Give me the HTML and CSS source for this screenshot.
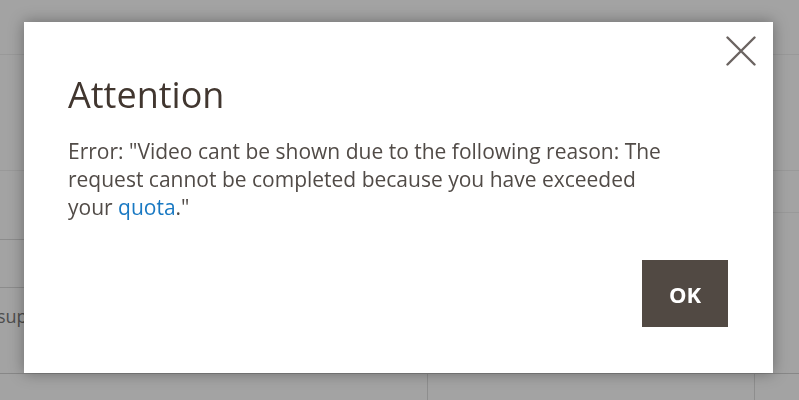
FILE: index.html
```html
<!DOCTYPE html>
<html lang="en">
<head>
    <meta charset="UTF-8">
    <meta name="viewport" content="width=device-width, initial-scale=1.0">
    <title>Attention</title>
    <link rel="stylesheet" href="styles.css">
</head>
<body>
    <div class="page">
        <div class="page-main">
            <div class="page-col">
                <div class="row row-top"></div>
                <div class="row row-mid"></div>
                <div class="row row-a"></div>
                <div class="row row-b"></div>
                <div class="row row-c"><span class="cell-text">sup</span></div>
            </div>
            <div class="page-col">
                <div class="row row-top"></div>
                <div class="row row-mid"></div>
                <div class="row row-d"></div>
                <div class="row row-rest"></div>
            </div>
        </div>
        <div class="page-foot">
            <div class="foot-cell"></div>
            <div class="foot-cell"></div>
            <div class="foot-cell"></div>
        </div>
    </div>

    <div class="overlay">
        <div class="modal">
            <div class="modal-header">
                <h1 class="modal-title">Attention</h1>
                <button class="close-btn" aria-label="Close">
                    <svg width="30" height="30" viewBox="0 0 30 30">
                        <path d="M1.5 1.5 L28.5 28.5 M28.5 1.5 L1.5 28.5" stroke="#6b6461" stroke-width="2.4" stroke-linecap="round" fill="none"/>
                    </svg>
                </button>
            </div>
            <div class="modal-content">
                Error: "Video cant be shown due to the following reason: The request cannot be completed because you have exceeded your <a href="#" class="link">quota</a>."
            </div>
            <div class="modal-footer">
                <button class="ok-btn">OK</button>
            </div>
        </div>
    </div>
</body>
</html>
```

FILE: styles.css
```css
* {
    margin: 0;
    padding: 0;
    box-sizing: border-box;
}

body {
    font-family: 'Open Sans', 'Liberation Sans', sans-serif;
    background: #a3a3a3;
    width: 799px;
    height: 400px;
    overflow: hidden;
}

/* page behind the overlay */
.page {
    display: flex;
    flex-direction: column;
    height: 400px;
}

.page-main {
    display: grid;
    grid-template-columns: 427px 1fr;
    height: 374px;
    border-bottom: 1px solid #878787;
}

.page-col {
    display: flex;
    flex-direction: column;
    overflow: hidden;
}

.row {
    border-bottom: 1px solid #999;
}

.row-top { height: 55px; }
.row-mid { height: 116px; }
.row-a { height: 69px; border-bottom-color: #8c8c8c; }
.row-b { height: 48px; border-bottom-color: #8c8c8c; }
.row-c {
    height: 85px;
    border-bottom: none;
    display: flex;
    align-items: center;
    padding-bottom: 30px;
}
.row-d { height: 42px; }
.row-rest { flex: 1; border-bottom: none; }

.cell-text {
    color: #4e4e4e;
    font-size: 18px;
    margin-left: -3px;
}

.page-foot {
    flex: 1;
    display: grid;
    grid-template-columns: 427px 327px 1fr;
}

.foot-cell + .foot-cell {
    border-left: 1px solid #8e8e8e;
}

/* modal */
.overlay {
    position: fixed;
    inset: 0;
}

.modal {
    position: absolute;
    top: 22px;
    left: 24px;
    width: 749px;
    height: 351px;
    background: #fff;
    box-shadow: 0 0 14px rgba(0, 0, 0, 0.35);
    display: flex;
    flex-direction: column;
    padding: 0 45px 46px 44px;
}

.modal-header {
    display: flex;
    justify-content: space-between;
    align-items: flex-start;
    padding-top: 49px;
}

.modal-title {
    font-size: 36px;
    font-weight: 400;
    color: #41362f;
    line-height: 48px;
}

.close-btn {
    border: none;
    background: none;
    margin-top: -35px;
    margin-right: -28px;
    width: 30px;
    height: 30px;
    cursor: pointer;
}

.modal-content {
    margin-top: 18px;
    font-size: 21px;
    line-height: 28px;
    color: #514b47;
    max-width: 600px;
}

.link {
    color: #1979c3;
    text-decoration: none;
}

.modal-footer {
    margin-top: auto;
    display: flex;
    justify-content: flex-end;
}

.ok-btn {
    width: 86px;
    height: 67px;
    background: #514943;
    border: none;
    color: #fff;
    font-family: 'Open Sans', 'Liberation Sans', sans-serif;
    font-size: 22px;
    font-weight: 700;
    cursor: pointer;
}
```
